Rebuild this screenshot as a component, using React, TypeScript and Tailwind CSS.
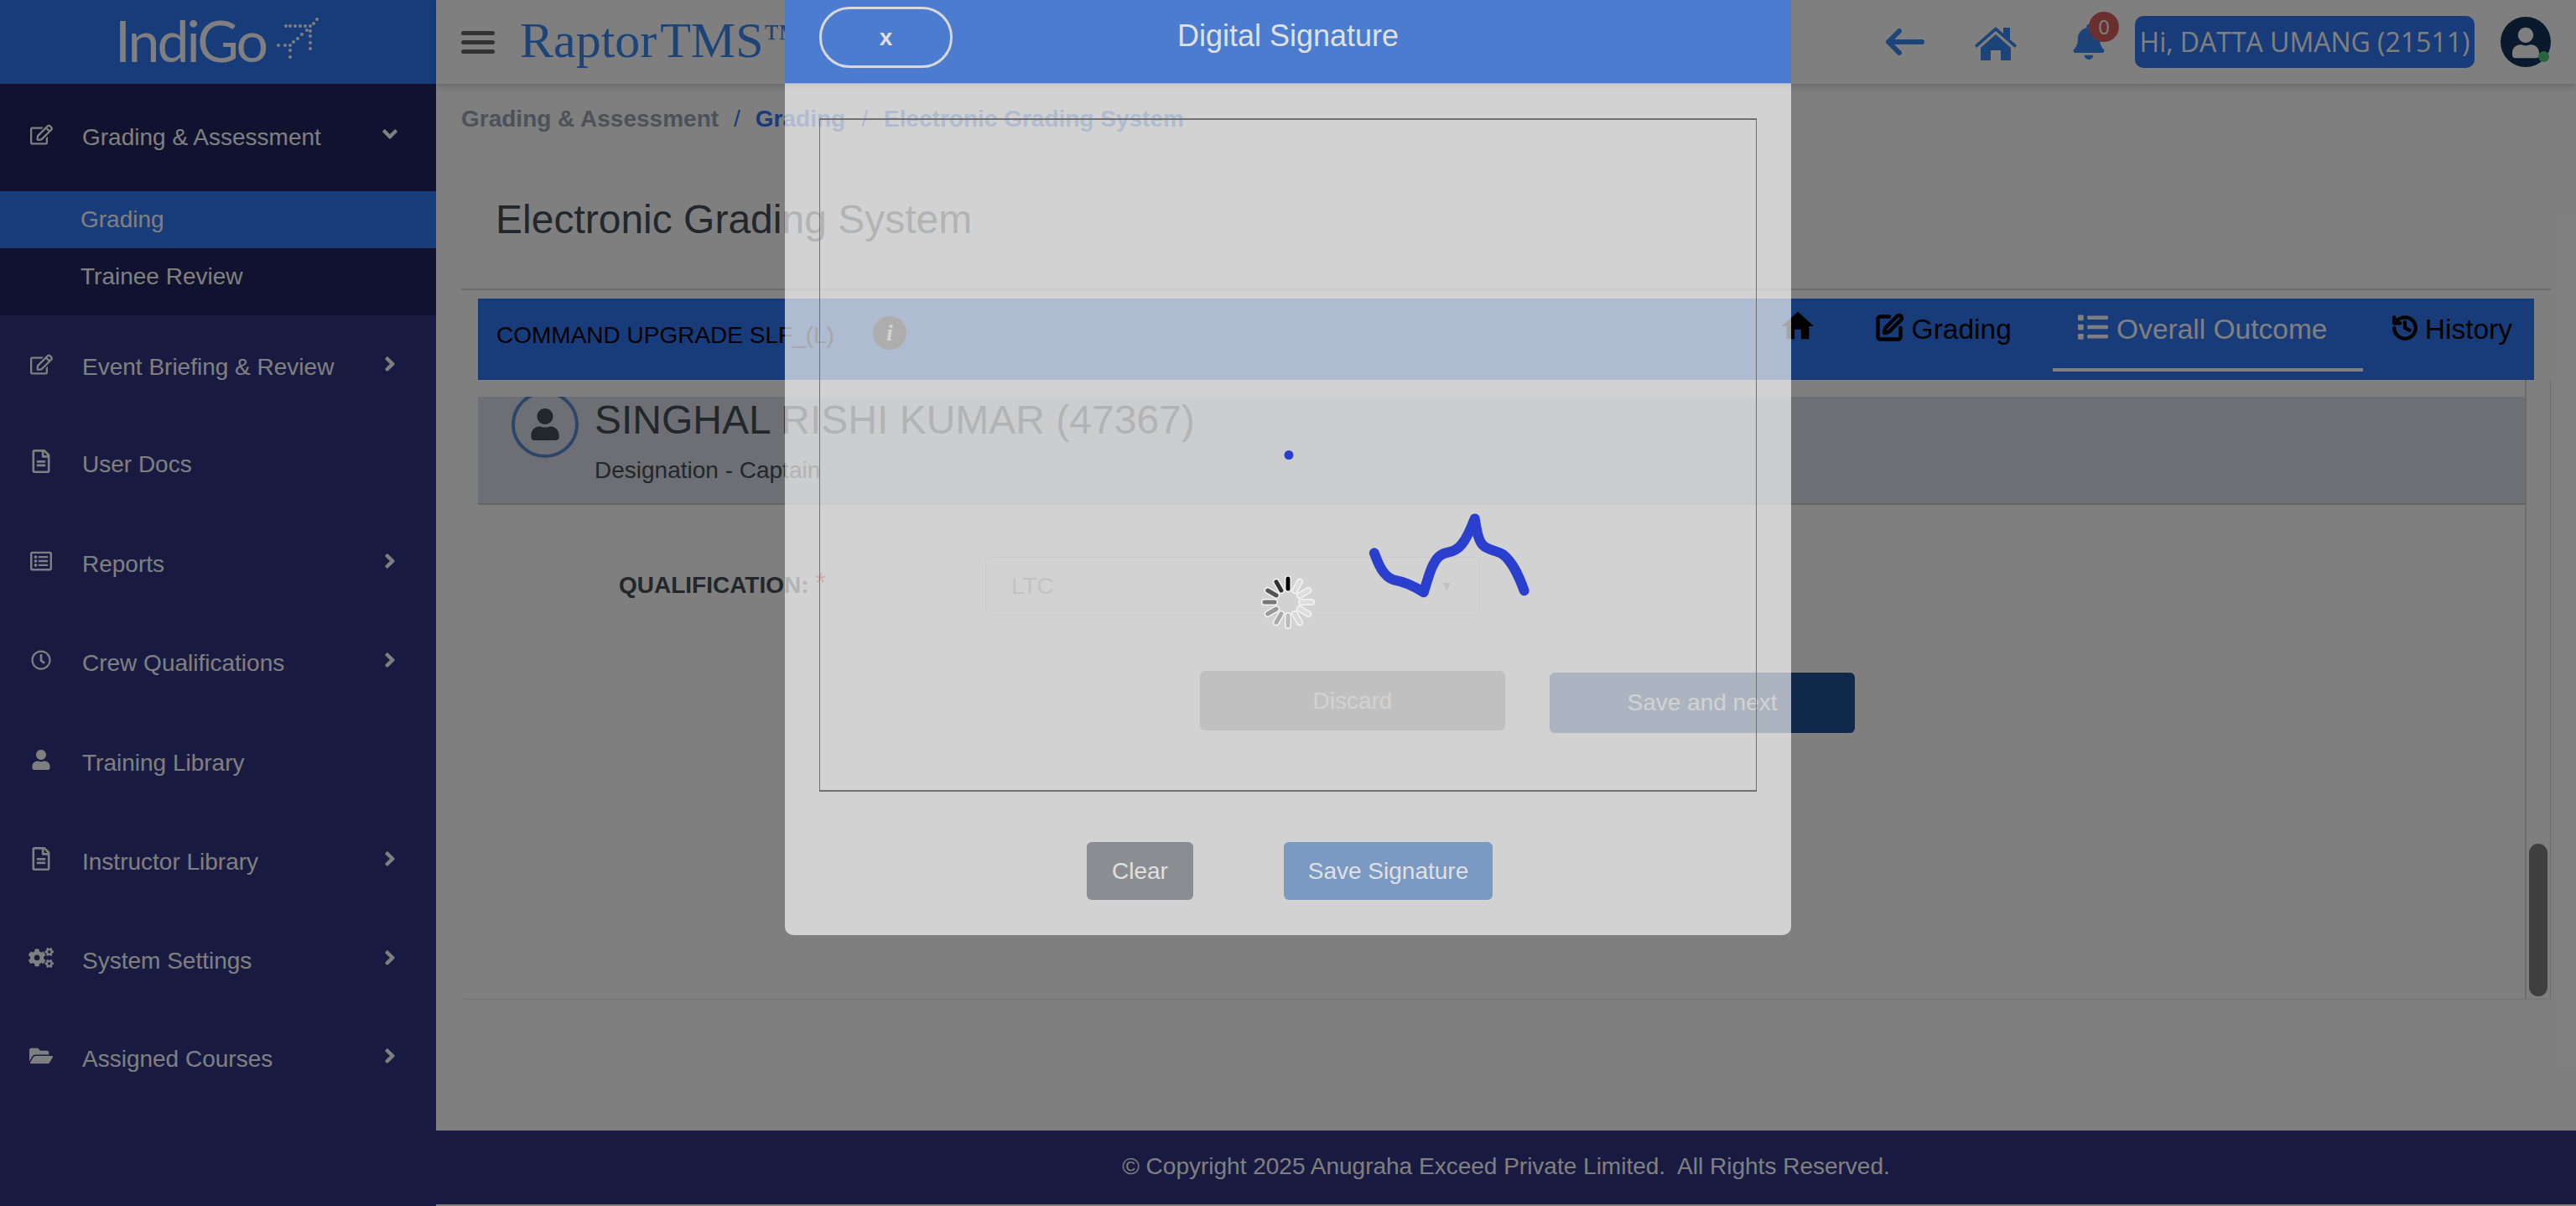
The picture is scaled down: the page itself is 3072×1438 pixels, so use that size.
import React from 'react';
import {
  FaAngleRight,
  FaAngleDown,
  FaBell,
  FaCogs,
  FaFolderOpen,
  FaList,
  FaRegClock,
  FaRegEdit,
  FaRegFileAlt,
  FaRegListAlt,
  FaUser,
} from 'react-icons/fa';
import { MdHome } from 'react-icons/md';
import { History, SquarePen } from 'lucide-react';

const menu = [
  { label: 'Event Briefing & Review', icon: FaRegEdit, size: 'w-[27px] h-[27px]', arrow: true, shift: '' },
  { label: 'User Docs', icon: FaRegFileAlt, size: 'w-[28px] h-[28px]', arrow: false, shift: 'pb-[4px]' },
  { label: 'Reports', icon: FaRegListAlt, size: 'w-[26px] h-[26px]', arrow: true, shift: 'pb-[2px]' },
  { label: 'Crew Qualifications', icon: FaRegClock, size: 'w-[24px] h-[24px]', arrow: true, shift: 'pb-[2px]' },
  { label: 'Training Library', icon: FaUser, size: 'w-[24px] h-[24px]', arrow: false, shift: '' },
  { label: 'Instructor Library', icon: FaRegFileAlt, size: 'w-[28px] h-[28px]', arrow: true, shift: '' },
  { label: 'System Settings', icon: FaCogs, size: 'w-[32px] h-[32px]', arrow: true, shift: '' },
  { label: 'Assigned Courses', icon: FaFolderOpen, size: 'w-[28px] h-[28px]', arrow: true, shift: 'pb-[2px]' },
];

const logoDots = [
  [378, 23], [374, 28], [370, 31], [364, 31], [358, 31], [352, 31], [346, 31], [341, 31],
  [370, 37], [370, 43], [370, 51], [370, 58],
  [366, 36], [360, 41], [355, 46], [350, 50], [346, 54], [340, 54], [332, 54],
  [346, 60], [346, 68],
];

const spokes = [
  '#000000', '#dedede', '#dedede', '#dedede', '#dedede', '#d8d8d8',
  '#bbbbbb', '#a8a8a8', '#999999', '#777777', '#555555', '#333333',
];

const Sidebar = () => (
  <aside className="w-[520px] shrink-0 h-full bg-[#303484] text-white flex flex-col">
    <div className="h-[100px] bg-[#3078f4] flex items-center relative">
      <span className="ml-[137px] mb-[4px] text-[68px] leading-none tracking-[-3px] font-['Lato','Liberation_Sans',sans-serif] font-normal">IndiGo</span>
      <svg className="absolute left-0 top-0 w-[520px] h-[100px]" viewBox="0 0 520 100" fill="#ffffff">
        {logoDots.map(([x, y]) => (
          <circle key={`${x}-${y}`} cx={x} cy={y} r="2" />
        ))}
      </svg>
    </div>
    <div className="bg-[#20245e] h-[276px] flex flex-col">
      <div className="h-[128px] flex items-center pl-[34px] pr-[41px]">
        <span className="w-[30px] shrink-0 flex justify-center mb-[8px]">
          <FaRegEdit className="w-[27px] h-[27px]" />
        </span>
        <span className="ml-[34px] flex-1 text-[28px]">Grading &amp; Assessment</span>
        <FaAngleDown className="w-[28px] h-[28px] mb-[8px]" />
      </div>
      <div className="h-[68px] bg-[#3078f4] flex items-center pl-[96px] text-[28px]">Grading</div>
      <div className="h-[80px] pb-[12px] flex items-center pl-[96px] text-[28px]">Trainee Review</div>
    </div>
    <div className="pt-[3px] flex flex-col">
      {menu.map((item) => (
        <div key={item.label} className={`h-[118px] flex items-center pl-[34px] pr-[41px] ${item.shift}`}>
          <span className="w-[30px] shrink-0 flex justify-center mb-[8px]">
            <item.icon className={item.size} />
          </span>
          <span className="ml-[34px] flex-1 text-[28px]">{item.label}</span>
          {item.arrow && <FaAngleRight className="w-[28px] h-[28px] mb-[8px]" />}
        </div>
      ))}
    </div>
  </aside>
);

const Header = () => (
  <header className="h-[100px] shrink-0 bg-white shadow-[0_3px_8px_rgba(0,0,0,0.2)] relative flex items-center pl-[30px] pr-[30px]">
    <div className="w-[40px] flex flex-col gap-[6px]">
      <span className="h-[5px] bg-[#666666] rounded-sm" />
      <span className="h-[5px] bg-[#666666] rounded-sm" />
      <span className="h-[5px] bg-[#666666] rounded-sm" />
    </div>
    <span className="ml-[30px] mb-[4px] text-[60px] leading-none [word-spacing:-10px] text-[#3a88f0] font-['Liberation_Serif',serif] whitespace-nowrap">
      Raptor TMS<span className="text-[44px] relative -top-[9px]">™</span>
    </span>
    <div className="ml-auto flex items-center">
      <svg className="w-[48px] h-[32px] text-[#3a88f0]" viewBox="0 0 48 32" fill="none" stroke="currentColor" strokeWidth="6" strokeLinecap="round" strokeLinejoin="round">
        <path d="M4 16 H44 M17 3 L4 16 L17 29" />
      </svg>
      <svg className="ml-[59px] w-[50px] h-[40px] text-[#3a88f0] mt-[4px]" viewBox="0 0 50 40" fill="currentColor">
        <path d="M25 0 L34 8 V1 H42 V15 L50 22 L48 25 L25 5 L2 25 L0 22 Z" />
        <path d="M25 9 L43 25 V40 H31 V28 H19 V40 H7 V25 Z" />
      </svg>
      <span className="ml-[67px] relative">
        <FaBell className="w-[38px] h-[42px] text-[#3a88f0]" />
        <span className="absolute left-[19px] top-[-15px] w-[36px] h-[36px] rounded-full bg-[#d85e5e] text-white text-[24px] flex items-center justify-center font-['Open_Sans',sans-serif]">0</span>
      </span>
      <div className="ml-[36px] w-[405px] h-[62px] rounded-[10px] bg-[#3078f4] text-white text-[32px] flex items-center justify-center font-['Open_Sans',sans-serif] whitespace-nowrap">
        Hi, DATTA UMANG (21511)
      </div>
      <div className="ml-[31px] w-[60px] h-[60px] rounded-full bg-[#143258] relative overflow-hidden">
        <FaUser className="absolute left-[14px] top-[10px] w-[32px] h-[42px] text-white" />
      </div>
    </div>
    <span className="absolute left-[2507px] top-[61px] w-[13px] h-[13px] rounded-full bg-[#50c878]" />
  </header>
);

const Main = () => (
  <main className="flex-1 bg-white px-[30px] min-h-0 text-[#444e56]">
    <div className="mt-[22px] h-[40px] flex items-center text-[28px] font-bold text-[#98a4b2] whitespace-nowrap">
      <span>Grading &amp; Assessment</span>
      <span className="mx-[18px] font-normal text-[#3078f4]">/</span>
      <span className="text-[#3078f4]">Grading</span>
      <span className="mx-[19px] font-normal text-[#3078f4]">/</span>
      <span className="text-[#3078f4]">Electronic Grading System</span>
    </div>
    <h1 className="mt-[70px] ml-[41px] h-[60px] flex items-center text-[48px]">Electronic Grading System</h1>
    <div className="mt-[52px] h-[2px] bg-[#d8d8d8]" />
    <div className="mt-[10px] mx-[20px] h-[97px] bg-[#3078f4] flex items-center relative text-black">
      <span className="ml-[22px] text-[28px] mt-[-10px]">COMMAND UPGRADE SLF_(L)</span>
      <span className="ml-[46px] w-[40px] h-[40px] mt-[-15px] rounded-full bg-[#2a2a2a] text-white italic font-bold text-[28px] flex items-center justify-center font-['Liberation_Serif',serif]">i</span>
      <div className="ml-auto flex items-start h-full pt-[12px] text-[33.5px]">
        <MdHome className="w-[46px] h-[46px] -mt-[2px]" />
        <SquarePen className="ml-[68px] w-[36px] h-[36px] mt-[5px]" strokeWidth={3} />
        <span className="ml-[9px]">Grading</span>
        <div className="ml-[49px] w-[370px] h-[75px] pr-[12px] border-b-[4px] border-white flex items-start justify-center text-white">
          <FaList className="w-[36px] h-[36px] mt-[4px]" />
          <span className="ml-[10px]">Overall Outcome</span>
        </div>
        <History className="ml-[33px] w-[34px] h-[34px] mt-[6px]" strokeWidth={3} />
        <span className="ml-[7px] mr-[26px]">History</span>
      </div>
    </div>
    <div className="h-[739px] flex border-b border-[#e8e8e8] rounded-b-md">
      <div className="flex-1 pl-[20px] pt-[20px] overflow-hidden">
        <div className="h-[129px] bg-[#dadfe8] border-b-2 border-[#c8c8c8] overflow-hidden flex pl-[40px]">
          <div className="w-[80px] h-[80px] -mt-[7px] shrink-0 rounded-full border-[4px] border-[#5a8ad0] flex items-center justify-center">
            <FaUser className="w-[36px] h-[38px]" />
          </div>
          <div className="ml-[19px]">
            <div className="h-[56px] flex items-center text-[48px] leading-none">SINGHAL RISHI KUMAR (47367)</div>
            <div className="mt-[12px] h-[40px] flex items-center text-[28px]">Designation - Captain</div>
          </div>
        </div>
        <div className="mt-[62px] pl-[168px] flex items-center">
          <label className="w-[437px] mb-[2px] text-[28px] font-bold relative">
            QUALIFICATION:
            <span className="absolute left-[234px] top-0 text-[34px] leading-none text-[#ff3030] font-normal">*</span>
          </label>
          <div className="w-[589px] h-[70px] border border-[#d4d4d4] rounded-md pl-[30px] pr-[30px] flex items-center justify-between text-[28px] text-[#9aa0a6]">
            <span>LTC</span>
            <span className="text-[16px]">▼</span>
          </div>
        </div>
        <div className="mt-[66px] pl-[861px] flex items-start">
          <button className="w-[364px] h-[71px] rounded-md bg-[#96989c] text-white text-[28px]">Discard</button>
          <button className="ml-[53px] mt-[2px] w-[364px] h-[72px] rounded-md bg-[#205294] text-white text-[28px]">Save and next</button>
        </div>
      </div>
      <div className="w-[31px] border-l-2 border-r border-[#d8d8d8] pt-[553px] flex justify-center">
        <div className="w-[22px] h-[182px] rounded-full bg-[#7e7e7e]" />
      </div>
    </div>
  </main>
);

const SignatureModal = () => (
  <div className="absolute left-[936px] top-0 w-[1200px] h-[1115px] bg-white/65 rounded-b-[10px] flex flex-col text-[#e0e0e0]">
    <div className="h-[100px] bg-[#4c7cd0] grid grid-cols-[1fr_auto_1fr] items-center border-b border-[#a0b0d0]">
      <button className="ml-[41px] mb-[10px] w-[159px] h-[73px] rounded-[36px] border-[3px] border-[#d8d8d8] text-[28px] font-bold">x</button>
      <span className="text-[36px] mb-[14px]">Digital Signature</span>
    </div>
    <div className="mt-[41px] mx-[41px] h-[803px] border border-[#707070] border-t-2 border-b-2 relative">
      <svg className="absolute inset-0 w-full h-full" viewBox="0 0 1116 800" fill="none">
        <path
          d="M661 517 C666 531 672 545 684 549 C695 551 708 556 720 564 C725 548 728 536 732 530 C736 522 740 518 750 516 C762 514 770 505 781 476 C784 495 786 503 791 508 C797 514 808 514 815 519 C825 527 832 540 840 562"
          stroke="#2b3fcf"
          strokeWidth="12"
          strokeLinecap="round"
          strokeLinejoin="round"
        />
        <circle cx="559" cy="400" r="5.5" fill="#2b3fcf" />
      </svg>
    </div>
    <div className="mt-[60px] pl-[360px] flex text-[28px]">
      <button className="w-[127px] h-[69px] rounded-md bg-[#8a8e92]">Clear</button>
      <button className="ml-[108px] w-[249px] h-[69px] rounded-md bg-[#7a9ac4]">Save Signature</button>
    </div>
  </div>
);

const Spinner = () => (
  <svg className="absolute left-[1500px] top-[682px] w-[72px] h-[72px]" viewBox="-36 -36 72 72">
    {spokes.map((color, i) => (
      <g key={i} transform={`rotate(${i * 30})`}>
        <line x1="0" y1="-16" x2="0" y2="-28" stroke="#f4f4f4" strokeWidth="8" strokeLinecap="round" />
        <line x1="0" y1="-16" x2="0" y2="-28" stroke={color} strokeWidth="5" strokeLinecap="round" />
      </g>
    ))}
  </svg>
);

const App: React.FC = () => {
  return (
    <div className="relative h-screen w-full overflow-hidden flex bg-white font-['Liberation_Sans',Arial,sans-serif]">
      <Sidebar />
      <div className="flex-1 min-w-0 flex flex-col">
        <Header />
        <Main />
        <footer className="h-[88px] pb-[2px] mb-[2px] shrink-0 bg-[#303484] text-white text-[28px] flex items-center justify-center whitespace-pre">
          © Copyright 2025 Anugraha Exceed Private Limited.  All Rights Reserved.
        </footer>
      </div>
      <div className="absolute inset-0 bg-black/50" />
      <SignatureModal />
      <Spinner />
    </div>
  );
};

export default App;
